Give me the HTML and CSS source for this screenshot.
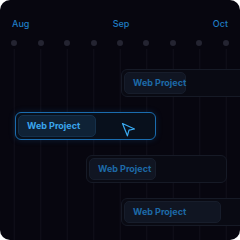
FILE: index.html
```html
<!DOCTYPE html>
<html lang="en">
<head>
    <meta charset="UTF-8">
    <meta name="viewport" content="width=device-width, initial-scale=1.0">
    <title>Timeline</title>
    <link rel="stylesheet" href="styles.css">
</head>
<body>
    <div class="frame">
        <div class="months">
            <span>Aug</span>
            <span>Sep</span>
            <span>Oct</span>
        </div>
        <div class="ticks">
            <span class="dot"></span><span class="dot"></span><span class="dot"></span>
            <span class="dot"></span><span class="dot"></span><span class="dot"></span>
            <span class="dot"></span><span class="dot"></span><span class="dot"></span>
        </div>
        <div class="chart">
            <div class="bar" style="margin-left: 120px;">
                <div class="pill" style="width: 62px;">Web Project</div>
            </div>
            <div class="bar active" style="margin-left: 14px;">
                <div class="pill" style="width: 78px;">Web Project</div>
                <svg class="cursor" width="16" height="16" viewBox="0 0 16 16">
                    <path d="M1.5 1.5 L13.5 7 L8 8.2 L6.4 13.8 Z" fill="none" stroke="#3aaaf0" stroke-width="1.2" stroke-linejoin="round"/>
                </svg>
            </div>
            <div class="bar" style="margin-left: 85px;">
                <div class="pill" style="width: 67px;">Web Project</div>
            </div>
            <div class="bar" style="margin-left: 120px;">
                <div class="pill" style="width: 97px;">Web Project</div>
            </div>
        </div>
    </div>
</body>
</html>
```

FILE: styles.css
```css
body {
    margin: 0;
    background-color: #ffffff;
    font-family: Inter, "Noto Sans", sans-serif;
}
.frame {
    width: 240px;
    height: 240px;
    border-radius: 10px;
    background-color: #07060f;
    overflow: hidden;
    display: flex;
    flex-direction: column;
}
.months {
    display: flex;
    justify-content: space-between;
    padding: 18px 12px 0 12px;
    font-size: 9px;
    font-weight: 500;
    line-height: 11px;
    color: #1f7cc2;
}
.ticks {
    display: grid;
    grid-template-columns: repeat(9, 1fr);
    padding: 0 1px;
    margin-top: 11px;
    justify-items: center;
}
.dot {
    width: 6px;
    height: 6px;
    border-radius: 50%;
    background-color: #242431;
}
.chart {
    flex: 1;
    margin-top: 3px;
    padding: 20px 0 0 1px;
    display: flex;
    flex-direction: column;
    gap: 15px;
    background-image: linear-gradient(to right, transparent 13px, #10101a 13px, #10101a 14px, transparent 14px);
    background-size: 26.5px 100%;
    background-position: 1px 0;
    background-repeat: repeat-x;
}
.bar {
    flex-shrink: 0;
    width: 141px;
    height: 28px;
    box-sizing: border-box;
    padding: 2px;
    border: 1px solid #161a26;
    border-radius: 6px;
    background-color: #090a13;
    display: flex;
    align-items: center;
}
.pill {
    height: 22px;
    box-sizing: border-box;
    border: 1px solid #171d2b;
    border-radius: 5px;
    background-color: #101522;
    color: #1d6aa8;
    font-size: 9px;
    font-weight: 700;
    line-height: 20px;
    padding-left: 8px;
    white-space: nowrap;
}
.bar.active {
    border-color: #1a6cae;
    background-color: #08101c;
    box-shadow: 0 0 6px rgba(26, 108, 174, 0.25);
}
.bar.active .pill {
    background-color: #0f2236;
    border-color: #15304a;
    color: #3aa6ee;
}
.cursor {
    margin-left: 25px;
    margin-top: 7px;
}
```
